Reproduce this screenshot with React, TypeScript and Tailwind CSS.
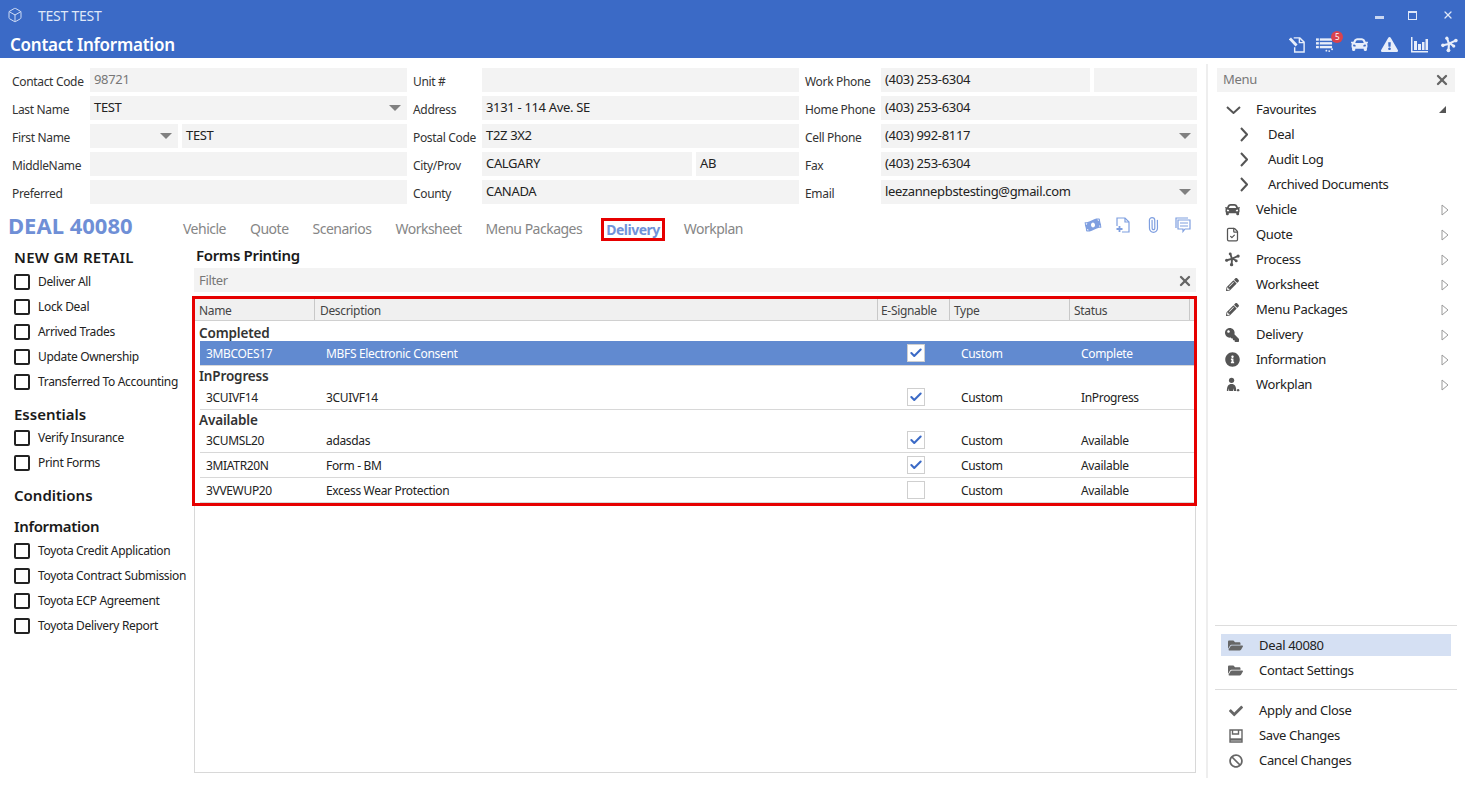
import { ReactNode } from "react";
import { Box, FileCheck, Paperclip, X, Check } from "lucide-react";
import { FaBan, FaCar, FaCheck, FaExclamationTriangle, FaFolderOpen, FaInfoCircle, FaKey, FaMoneyBillWave, FaPencilAlt } from "react-icons/fa";

function Caret() {
  return <span className="ml-auto mr-[2px] mt-[1px] h-0 w-0 border-x-[6px] border-t-[6px] border-x-transparent border-t-[#808080]" />;
}

function Field({ value, muted, caret, className = "flex-1" }: { value?: string; muted?: boolean; caret?: boolean; className?: string }) {
  return (
    <div className={`flex h-6 items-center bg-[#f3f3f3] px-[4px] pb-[1px] text-[13px] ${className} ${muted ? "text-[#777]" : "text-[#222]"}`}>
      <span>{value}</span>
      {caret && <Caret />}
    </div>
  );
}

function Row({ label, width, children }: { label: string; width: string; children: ReactNode }) {
  return (
    <div className="flex h-6 items-center">
      <span className={`${width} shrink-0 pt-[3px] text-[#333]`}>{label}</span>
      <div className="flex flex-1 gap-1">{children}</div>
    </div>
  );
}

function ProcessIcon({ className }: { className: string }) {
  return (
    <svg viewBox="0 0 16 16" className={className} fill="none" stroke="currentColor">
      <path d="M1 9 7 7.500 9 6.500 14.500 4M5.500 1.500 7.500 7.500 7 14M8.500 7 12 9.500" strokeWidth="2" />
      <circle cx="5.500" cy="2" r="1.500" fill="currentColor" stroke="none" />
      <circle cx="1.800" cy="8.800" r="1.700" fill="currentColor" stroke="none" />
      <circle cx="7" cy="13.500" r="1.800" fill="currentColor" stroke="none" />
      <circle cx="14" cy="4.300" r="1.700" fill="currentColor" stroke="none" />
      <circle cx="12" cy="9.500" r="1.500" fill="currentColor" stroke="none" />
    </svg>
  );
}

function HeaderIcons() {
  return (
    <div className="ml-auto flex items-center text-[#e8eefa]">
      <svg viewBox="0 0 18 18" className="mr-[10px] h-[17px] w-[17px]" fill="none" stroke="currentColor" strokeWidth="1.500">
        <path d="M5 2h6.500l4.500 4.500V17H6v-5" />
        <path d="M11 2v5h5" />
        <path d="M1 2.500 8 10" strokeWidth="3" />
      </svg>
      <div className="relative mr-[18px] h-[17px] w-[17px]">
        <svg viewBox="0 0 18 17" className="h-[17px] w-[17px]" fill="currentColor">
          <rect x="0" y="2" width="3" height="2.500" />
          <rect x="4" y="2" width="13" height="2.500" />
          <rect x="0" y="6" width="3" height="2.500" />
          <rect x="4" y="6" width="13" height="2.500" />
          <rect x="0" y="10" width="3" height="2.500" />
          <rect x="4" y="10" width="13" height="2.500" />
          <circle cx="11" cy="15" r="1" />
          <circle cx="14" cy="15.500" r="1" />
          <circle cx="17" cy="13.500" r="1" />
        </svg>
        <span className="absolute -right-[10px] -top-[5px] flex h-[12px] w-[12px] items-center justify-center rounded-full bg-[#d9434e] text-[8px] text-white">5</span>
      </div>
      <FaCar className="mr-[13px] h-[17px] w-[17px]" />
      <FaExclamationTriangle className="mr-[13px] h-[17px] w-[17px]" />
      <svg viewBox="0 0 17 17" className="mr-[13px] h-[17px] w-[17px]" fill="currentColor">
        <path d="M0 1h1.500v14H17v1.500H0z" />
        <rect x="3" y="5" width="3" height="9" />
        <rect x="7" y="8" width="3" height="6" />
        <rect x="11" y="6" width="2.500" height="8" />
        <rect x="14.500" y="3" width="2.500" height="11" />
      </svg>
      <ProcessIcon className="mr-[7px] h-[17px] w-[17px]" />
    </div>
  );
}

function SideCheck({ label }: { label: string }) {
  return (
    <div className="flex h-[25px] items-center">
      <span className="ml-[14px] h-4 w-4 rounded-[2px] border-2 border-[#222]" />
      <span className="ml-2 whitespace-nowrap text-[#222]">{label}</span>
    </div>
  );
}

function Heading({ children, className = "h-6" }: { children: ReactNode; className?: string }) {
  return <div className={`flex items-center pl-[14px] text-[15px] font-semibold text-[#1a1a1a] ${className}`}>{children}</div>;
}

function Tab({ children }: { children: ReactNode }) {
  return <span className="text-[14px] tracking-[-0.5px] text-[#868686]">{children}</span>;
}

function Sign({ on }: { on: boolean }) {
  return (
    <span className="mx-auto flex h-[18px] w-[18px] items-center justify-center border border-[#cfcfcf] bg-white">
      {on && <Check className="h-[14px] w-[14px] text-[#3b6ac6]" strokeWidth={3.5} />}
    </span>
  );
}

function FormRow({ name, desc, on, status, selected }: { name: string; desc: string; on: boolean; status: string; selected?: boolean }) {
  return (
    <div className={`ml-[5px] grid h-[25px] grid-cols-[120px_555px_82px_120px_1fr] items-center border-b border-[#d8d8d8] ${selected ? "bg-[#618ad0] text-white" : "text-[#222]"}`}>
      <span className="pl-[6px] pt-[1px]">{name}</span>
      <span className="pl-[6px] pt-[1px]">{desc}</span>
      <Sign on={on} />
      <span className="pl-1 pt-[1px]">Custom</span>
      <span className="pl-1 pt-[1px]">{status}</span>
    </div>
  );
}

function GroupName({ children, className }: { children: ReactNode; className: string }) {
  return <div className={`flex items-end pl-1 text-[13.5px] font-semibold leading-[16px] tracking-[-0.15px] text-[#333] ${className}`}>{children}</div>;
}

function HeadCell({ children, className = "pl-1" }: { children: ReactNode; className?: string }) {
  return <div className={`flex items-center border-r border-[#c8c8c8] pt-[2px] text-[#444] ${className}`}>{children}</div>;
}

function Arrow() {
  return (
    <svg viewBox="0 0 8 12" className="ml-auto mr-[6px] h-[12px] w-[8px]" fill="none" stroke="#9a9a9a">
      <path d="M1 1v10l6-5z" />
    </svg>
  );
}

function MenuRow({ icon, label }: { icon: ReactNode; label: string }) {
  return (
    <div className="flex h-[25px] items-center text-[13px] text-[#222]">
      <span className="flex w-[39px] justify-center pr-[9px] text-[#555]">{icon}</span>
      <span>{label}</span>
      <Arrow />
    </div>
  );
}

function SubRow({ label }: { label: string }) {
  return (
    <div className="flex h-[25px] items-center pl-[23px] text-[13px] text-[#222]">
      <svg viewBox="0 0 8 15" className="h-[15px] w-[8px]" fill="none" stroke="#555" strokeWidth="2">
        <path d="M1 1l6 6.500-6 6.500" />
      </svg>
      <span className="ml-[20px]">{label}</span>
    </div>
  );
}

function ActionRow({ icon, label, active }: { icon: ReactNode; label: string; active?: boolean }) {
  return (
    <div className={`flex items-center text-[13px] text-[#222] ${active ? "mb-[2px] h-[22px] bg-[#d5e0f3] pt-[1px]" : "h-[25px]"}`}>
      <span className="flex w-[38px] justify-center pr-[9px] text-[#666]">{icon}</span>
      <span>{label}</span>
    </div>
  );
}

export default function App() {
  return (
    <div className="flex h-[785px] w-[1465px] flex-col overflow-hidden bg-white font-['Noto_Sans',sans-serif] text-[12px] tracking-[-0.33px]">
      <header className="h-[58px] shrink-0 bg-[#3b6ac6] text-white">
        <div className="flex h-[30px] items-center pl-[7px]">
          <Box className="h-4 w-4 text-[#cfdcf5]" strokeWidth={1.5} />
          <span className="ml-[15px] text-[14px] tracking-[-0.25px] text-[#dfe7f8]">TEST TEST</span>
          <div className="ml-auto flex items-center text-[#dfe7f8]">
            <span className="mr-[24px] mt-[5px] h-[3px] w-[9px] bg-[#c9d6f1]" />
            <span className="mr-[25px] h-[9px] w-[9px] border border-t-2 border-[#dfe7f8]" />
            <X className="mr-[11px] h-[12px] w-[12px]" strokeWidth={2.5} />
          </div>
        </div>
        <div className="flex h-7 items-center pl-[10px]">
          <span className="pt-[2px] text-[17px] font-semibold tracking-[-0.25px]">Contact Information</span>
          <HeaderIcons />
        </div>
      </header>

      <div className="flex min-h-0 flex-1">
        <main className="flex w-[1206px] shrink-0 flex-col pb-[12px]">
          <section className="flex gap-[6px] pl-[12px] pr-[9px] pt-[10px]">
            <div className="flex w-[395px] flex-col gap-1">
              <Row label="Contact Code" width="w-[78px]"><Field value="98721" muted /></Row>
              <Row label="Last Name" width="w-[78px]"><Field value="TEST" caret /></Row>
              <Row label="First Name" width="w-[78px]">
                <Field caret className="w-[88px]" />
                <Field value="TEST" />
              </Row>
              <Row label="MiddleName" width="w-[78px]"><Field /></Row>
              <Row label="Preferred" width="w-[78px]"><Field /></Row>
            </div>
            <div className="flex w-[386px] flex-col gap-1">
              <Row label="Unit #" width="w-[69px]"><Field /></Row>
              <Row label="Address" width="w-[69px]"><Field value="3131 - 114 Ave. SE" /></Row>
              <Row label="Postal Code" width="w-[69px]"><Field value="T2Z 3X2" /></Row>
              <Row label="City/Prov" width="w-[69px]">
                <Field value="CALGARY" className="w-[210px]" />
                <Field value="AB" />
              </Row>
              <Row label="County" width="w-[69px]"><Field value="CANADA" /></Row>
            </div>
            <div className="flex w-[392px] flex-col gap-1">
              <Row label="Work Phone" width="w-[76px]">
                <Field value="(403) 253-6304" className="w-[209px]" />
                <Field />
              </Row>
              <Row label="Home Phone" width="w-[76px]"><Field value="(403) 253-6304" /></Row>
              <Row label="Cell Phone" width="w-[76px]"><Field value="(403) 992-8117" caret /></Row>
              <Row label="Fax" width="w-[76px]"><Field value="(403) 253-6304" /></Row>
              <Row label="Email" width="w-[76px]"><Field value="leezannepbstesting@gmail.com" caret /></Row>
            </div>
          </section>

          <div className="mt-[5px] flex h-9 shrink-0 items-center">
            <span className="ml-[8px] w-[175px] pb-[3px] text-[22px] font-bold tracking-normal text-[#6f8fd6]">DEAL 40080</span>
            <div className="flex items-center gap-6 pt-[3px]">
              <Tab>Vehicle</Tab>
              <Tab>Quote</Tab>
              <Tab>Scenarios</Tab>
              <Tab>Worksheet</Tab>
              <Tab>Menu Packages</Tab>
              <span className="-mx-[5px] translate-y-[1px] border-[3px] border-[#e60000] px-[2px] text-[14px] font-bold leading-[17px] tracking-[-0.5px] text-[#7192d9]">Delivery</span>
              <Tab>Workplan</Tab>
            </div>
            <div className="ml-auto mr-[15px] flex items-center gap-[14px] pb-[4px] text-[#7f9fe0]">
              <FaMoneyBillWave className="h-4 w-4 -rotate-12" />
              <svg viewBox="0 0 16 16" className="h-4 w-4" fill="none" stroke="currentColor" strokeWidth="1.200">
                <path d="M2 9V1h8l4 4v10H7" />
                <path d="M10 1v4h4" />
                <path d="M4.500 9v6M1.500 12h6" strokeWidth="1.800" />
              </svg>
              <Paperclip className="h-4 w-4 -rotate-45" strokeWidth={1.8} />
              <svg viewBox="0 0 16 16" className="h-4 w-4" fill="none" stroke="currentColor" strokeWidth="1.200">
                <path d="M1 11V1h12" />
                <path d="M3 3h12v9H10l-2 2.500V12H3z" />
                <path d="M5 6h8M5 9h8" />
              </svg>
            </div>
          </div>

          <div className="flex min-h-0 flex-1">
            <aside className="w-[194px] shrink-0">
              <Heading className="h-6 tracking-[0.25px]">NEW GM RETAIL</Heading>
              <SideCheck label="Deliver All" />
              <SideCheck label="Lock Deal" />
              <SideCheck label="Arrived Trades" />
              <SideCheck label="Update Ownership" />
              <SideCheck label="Transferred To Accounting" />
              <Heading className="mt-2 h-[23px] pt-[1px] tracking-normal">Essentials</Heading>
              <SideCheck label="Verify Insurance" />
              <SideCheck label="Print Forms" />
              <Heading className="mt-2 h-6 tracking-normal">Conditions</Heading>
              <Heading className="mt-[7px] h-6">Information</Heading>
              <SideCheck label="Toyota Credit Application" />
              <SideCheck label="Toyota Contract Submission" />
              <SideCheck label="Toyota ECP Agreement" />
              <SideCheck label="Toyota Delivery Report" />
            </aside>

            <div className="flex w-[1002px] shrink-0 flex-col">
              <div className="-mt-[1px] flex h-[24px] items-start pl-[2px] text-[15px] font-semibold text-[#1a1a1a]">Forms Printing</div>
              <div className="flex h-6 items-center bg-[#f3f3f3] pl-[5px] pr-[3px] pt-[1px] text-[13px] text-[#777]">
                <span>Filter</span>
                <X className="ml-auto h-4 w-4 text-[#666]" strokeWidth={3.5} />
              </div>
              <div className="-ml-[2px] -mr-[1px] mt-1 border-[3px] border-[#e60000]">
                <div className="grid h-[22px] grid-cols-[120px_563px_72px_120px_120px_1fr] border-b border-[#d0d0d0] bg-[#f0f0f0]">
                  <HeadCell>Name</HeadCell>
                  <HeadCell className="pl-[5px]">Description</HeadCell>
                  <HeadCell className="whitespace-nowrap pl-[3px]">E-Signable</HeadCell>
                  <HeadCell>Type</HeadCell>
                  <HeadCell>Status</HeadCell>
                  <div />
                </div>
                <GroupName className="h-5">Completed</GroupName>
                <FormRow name="3MBCOES17" desc="MBFS Electronic Consent" on status="Complete" selected />
                <GroupName className="h-[19px] pb-[1px]">InProgress</GroupName>
                <FormRow name="3CUIVF14" desc="3CUIVF14" on status="InProgress" />
                <GroupName className="h-[18px]">Available</GroupName>
                <FormRow name="3CUMSL20" desc="adasdas" on status="Available" />
                <FormRow name="3MIATR20N" desc="Form - BM" on status="Available" />
                <FormRow name="3VVEWUP20" desc="Excess Wear Protection" on={false} status="Available" />
              </div>
              <div className="flex-1 border-x border-b border-[#d8d8d8]" />
            </div>
          </div>
        </main>

        <div className="mb-[7px] mt-[6px] w-[2px] shrink-0 bg-[#eeeeee]" />

        <aside className="flex flex-1 flex-col pb-[12px] pl-[9px] pr-[10px] pt-[10px]">
          <div className="flex h-6 items-center bg-[#f3f3f3] pl-[6px] pr-[5px] text-[13px] text-[#777]">
            <span>Menu</span>
            <X className="ml-auto h-4 w-4 text-[#666]" strokeWidth={3.5} />
          </div>
          <div className="mt-[5px]">
            <div className="flex h-[25px] items-center text-[13px] text-[#222]">
              <svg viewBox="0 0 15 8" className="ml-[9px] h-[8px] w-[15px]" fill="none" stroke="#555" strokeWidth="2">
                <path d="M1 1l6.500 6 6.500-6" />
              </svg>
              <span className="ml-[15px]">Favourites</span>
              <span className="ml-auto mr-[9px] h-0 w-0 border-b-[7px] border-l-[7px] border-b-[#555] border-l-transparent" />
            </div>
            <SubRow label="Deal" />
            <SubRow label="Audit Log" />
            <SubRow label="Archived Documents" />
            <MenuRow icon={<FaCar className="h-[15px] w-[15px]" />} label="Vehicle" />
            <MenuRow icon={<FileCheck className="h-[15px] w-[15px]" />} label="Quote" />
            <MenuRow icon={<ProcessIcon className="h-[15px] w-[15px]" />} label="Process" />
            <MenuRow icon={<FaPencilAlt className="h-[13px] w-[13px]" />} label="Worksheet" />
            <MenuRow icon={<FaPencilAlt className="h-[13px] w-[13px]" />} label="Menu Packages" />
            <MenuRow icon={<FaKey className="h-[14px] w-[14px] -scale-x-100" />} label="Delivery" />
            <MenuRow icon={<FaInfoCircle className="h-[15px] w-[15px]" />} label="Information" />
            <MenuRow
              icon={
                <svg viewBox="0 0 16 16" className="h-[15px] w-[15px]" fill="currentColor">
                  <circle cx="7" cy="3.500" r="2.800" />
                  <path d="M2 15c0-5 1.500-7.500 5-7.500s5 2.500 5 7.500h-2.500l-.5-3-.5 3h-4l-.5-3-.5 3z" />
                  <circle cx="14" cy="14" r="1.300" />
                </svg>
              }
              label="Workplan"
            />
          </div>
          <div className="mt-auto">
            <div className="-ml-[2px] -mr-[2px] border-t border-[#dddddd] pt-2">
              <div className="ml-[6px] mr-[6px]">
                <ActionRow icon={<FaFolderOpen className="h-[15px] w-[15px]" />} label="Deal 40080" active />
                <ActionRow icon={<FaFolderOpen className="h-[15px] w-[15px]" />} label="Contact Settings" />
              </div>
            </div>
            <div className="-ml-[2px] -mr-[2px] mt-[6px] border-t border-[#dddddd] pt-2">
              <div className="ml-[6px]">
                <ActionRow icon={<FaCheck className="h-[14px] w-[14px]" />} label="Apply and Close" />
                <ActionRow
                  icon={
                    <svg viewBox="0 0 14 14" className="h-[14px] w-[14px]" fill="none" stroke="currentColor" strokeWidth="1.400">
                      <path d="M1 1h12v12H1z" />
                      <path d="M3.500 1v4h6V1" />
                      <path d="M1 10.500h12" strokeWidth="2.400" />
                    </svg>
                  }
                  label="Save Changes"
                />
                <ActionRow icon={<FaBan className="h-[14px] w-[14px]" />} label="Cancel Changes" />
              </div>
            </div>
          </div>
        </aside>
      </div>
    </div>
  );
}
